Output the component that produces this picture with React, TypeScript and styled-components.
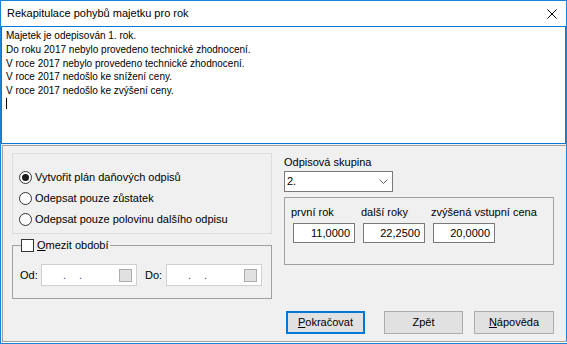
import React from "react";
import styled, { createGlobalStyle } from "styled-components";

const GlobalStyle = createGlobalStyle`
  html, body {
    margin: 0;
    padding: 0;
    background: #ffffff;
  }
  body {
    font-family: "Liberation Sans", Arial, sans-serif;
    font-size: 11px;
    color: #000000;
  }
  * {
    box-sizing: border-box;
  }
`;

const memoLines = [
  "Majetek je odepisován 1. rok.",
  "Do roku 2017 nebylo provedeno technické zhodnocení.",
  "V roce 2017 nebylo provedeno technické zhodnocení.",
  "V roce 2017 nedošlo ke snížení ceny.",
  "V roce 2017 nedošlo ke zvýšení ceny.",
];

const radioOptions = [
  { label: "Vytvořit plán daňových odpisů", checked: true },
  { label: "Odepsat pouze zůstatek", checked: false },
  { label: "Odepsat pouze polovinu dalšího odpisu", checked: false },
];

const rates = [
  { label: "první rok", value: "11,0000" },
  { label: "další roky", value: "22,2500" },
  { label: "zvýšená vstupní cena", value: "20,0000" },
];

const App = () => {
  return (
    <>
      <GlobalStyle />
      <Window>
        <TitleBar>
          <Title>Rekapitulace pohybů majetku pro rok</Title>
          <svg width="10" height="10" viewBox="0 0 10 10">
            <path d="M0.5 0.5 L9.5 9.5 M9.5 0.5 L0.5 9.5" stroke="#000" strokeWidth="1" />
          </svg>
        </TitleBar>
        <Memo>
          {memoLines.map((line) => (
            <MemoLine key={line}>{line}</MemoLine>
          ))}
          <MemoLine>
            <Caret />
          </MemoLine>
        </Memo>
        <Body>
          <Panel>
            <TopRow>
              <LeftCol>
                <RadioBox>
                  {radioOptions.map((opt) => (
                    <RadioRow key={opt.label}>
                      <RadioCircle>{opt.checked && <RadioDot />}</RadioCircle>
                      <OptionText>{opt.label}</OptionText>
                    </RadioRow>
                  ))}
                </RadioBox>
                <PeriodBox>
                  <Legend>
                    <CheckBox />
                    <OptionText>
                      <U>O</U>mezit období
                    </OptionText>
                  </Legend>
                  <DateRow>
                    <FieldLabel $width={21}>Od:</FieldLabel>
                    <DateInput>
                      <Dot>.</Dot>
                      <Dot $gap={13}>.</Dot>
                      <PickerButton />
                    </DateInput>
                    <FieldLabel $width={21} $offset={8}>
                      Do:
                    </FieldLabel>
                    <DateInput>
                      <Dot>.</Dot>
                      <Dot $gap={13}>.</Dot>
                      <PickerButton />
                    </DateInput>
                  </DateRow>
                </PeriodBox>
              </LeftCol>
              <RightCol>
                <GroupLabel>Odpisová skupina</GroupLabel>
                <Combo>
                  <span>2.</span>
                  <svg width="9" height="5" viewBox="0 0 9 5">
                    <path d="M0.5 0.5 L4.5 4.5 L8.5 0.5" fill="none" stroke="#606060" strokeWidth="1" />
                  </svg>
                </Combo>
                <RateBox>
                  <RateGrid>
                    {rates.map((r) => (
                      <RateCol key={r.label}>
                        <RateLabel>{r.label}</RateLabel>
                        <NumberInput>{r.value}</NumberInput>
                      </RateCol>
                    ))}
                  </RateGrid>
                </RateBox>
              </RightCol>
            </TopRow>
            <ButtonRow>
              <Button $primary $gapAfter={19}>
                <U>P</U>okračovat
              </Button>
              <Button $gapAfter={11}>Zpět</Button>
              <Button $width={80}>
                <U>N</U>ápověda
              </Button>
            </ButtonRow>
          </Panel>
        </Body>
      </Window>
    </>
  );
};

const Window = styled.div`
  width: 567px;
  height: 344px;
  border: 1px solid #1883d7;
  background: #f0f0f0;
  display: flex;
  flex-direction: column;
`;

const TitleBar = styled.div`
  height: 25px;
  flex: none;
  background: #ffffff;
  display: flex;
  align-items: center;
  justify-content: space-between;
  padding: 0 9px 0 6px;
`;

const Title = styled.span`
  font-size: 11px;
  line-height: 15px;
`;

const Memo = styled.div`
  height: 118px;
  flex: none;
  background: #ffffff;
  border: 1px solid #0078d7;
  padding: 2px 4px;
  font-size: 10px;
  line-height: 13.75px;
`;

const MemoLine = styled.div`
  white-space: nowrap;
  height: 13.75px;
`;

const Caret = styled.span`
  display: inline-block;
  width: 1px;
  height: 11px;
  background: #000000;
  vertical-align: top;
`;

const Body = styled.div`
  flex: 1;
  display: flex;
  padding: 1px 2px 1px 1px;
`;

const Panel = styled.div`
  flex: 1;
  display: flex;
  flex-direction: column;
  border: 1px solid #a0a0a0;
  box-shadow: 1px 1px 0 #ffffff;
  padding: 7px 15px 0 9px;
`;

const TopRow = styled.div`
  display: flex;
  align-items: flex-start;
`;

const LeftCol = styled.div`
  width: 260px;
  display: flex;
  flex-direction: column;
`;

const RadioBox = styled.div`
  height: 81px;
  border: 1px solid #dcdcdc;
  padding: 13px 0 0 6px;
`;

const RadioRow = styled.div`
  height: 21px;
  display: flex;
  align-items: center;
`;

const RadioCircle = styled.span`
  width: 13px;
  height: 13px;
  border: 1px solid #333333;
  border-radius: 50%;
  background: #ffffff;
  display: flex;
  align-items: center;
  justify-content: center;
  flex: none;
`;

const RadioDot = styled.span`
  width: 7px;
  height: 7px;
  border-radius: 50%;
  background: #1a1a1a;
`;

const OptionText = styled.span`
  margin-left: 3px;
  line-height: 15px;
  white-space: nowrap;
`;

const U = styled.span`
  text-decoration: underline;
`;

const PeriodBox = styled.fieldset`
  margin: 5px 0 0 0;
  min-width: 0;
  border: 1px solid #a0a0a0;
  padding: 12px 8px 12px 8px;
`;

const Legend = styled.legend`
  padding: 0 1px 0 0;
  height: 13px;
  display: flex;
  align-items: center;
`;

const CheckBox = styled.span`
  width: 13px;
  height: 13px;
  border: 1px solid #333333;
  background: #ffffff;
  flex: none;
`;

const DateRow = styled.div`
  display: flex;
  align-items: center;
  margin-left: -1px;
`;

const FieldLabel = styled.span<{ $width: number; $offset?: number }>`
  width: ${({ $width }) => $width}px;
  margin-left: ${({ $offset }) => $offset || 0}px;
  line-height: 15px;
  flex: none;
`;

const DateInput = styled.div`
  width: 96px;
  height: 22px;
  flex: none;
  border: 1px solid #d0d0d0;
  background: #ffffff;
  display: flex;
  align-items: center;
  padding: 0 4px 0 21px;
`;

const Dot = styled.span<{ $gap?: number }>`
  margin-left: ${({ $gap }) => $gap || 0}px;
  color: #3c4660;
  line-height: 15px;
  margin-top: 1px;
`;

const PickerButton = styled.span`
  margin-left: auto;
  width: 13px;
  height: 13px;
  background: #e1e1e1;
  border: 1px solid #adadad;
`;

const RightCol = styled.div`
  margin-left: 12px;
  width: 270px;
  display: flex;
  flex-direction: column;
`;

const GroupLabel = styled.div`
  margin-top: 2px;
  line-height: 15px;
`;

const Combo = styled.div`
  margin-top: 1px;
  width: 109px;
  height: 21px;
  border: 1px solid #7a7a7a;
  background: #ffffff;
  display: flex;
  align-items: center;
  justify-content: space-between;
  padding: 0 4px 0 2px;
  line-height: 15px;
`;

const RateBox = styled.div`
  margin-top: 5px;
  height: 68px;
  border: 1px solid #a0a0a0;
  padding: 7px 0 0 8px;
`;

const RateGrid = styled.div`
  display: grid;
  grid-template-columns: repeat(3, 62px);
  column-gap: 8px;
`;

const RateCol = styled.div`
  display: flex;
  flex-direction: column;
`;

const RateLabel = styled.span`
  margin-left: -2px;
  line-height: 15px;
  white-space: nowrap;
`;

const NumberInput = styled.div`
  margin-top: 3px;
  height: 20px;
  border: 1px solid #7a7a7a;
  background: #ffffff;
  text-align: right;
  padding: 0 4px;
  line-height: 18px;
`;

const ButtonRow = styled.div`
  margin-top: 12px;
  display: flex;
  justify-content: flex-end;
`;

const Button = styled.div<{ $primary?: boolean; $gapAfter?: number; $width?: number }>`
  width: ${({ $width }) => $width || 79}px;
  height: 23px;
  margin-right: ${({ $gapAfter }) => $gapAfter || 0}px;
  background: #e1e1e1;
  border: ${({ $primary }) => ($primary ? "2px solid #0078d7" : "1px solid #adadad")};
  display: flex;
  align-items: center;
  justify-content: center;
  line-height: 15px;
`;

export default App;
